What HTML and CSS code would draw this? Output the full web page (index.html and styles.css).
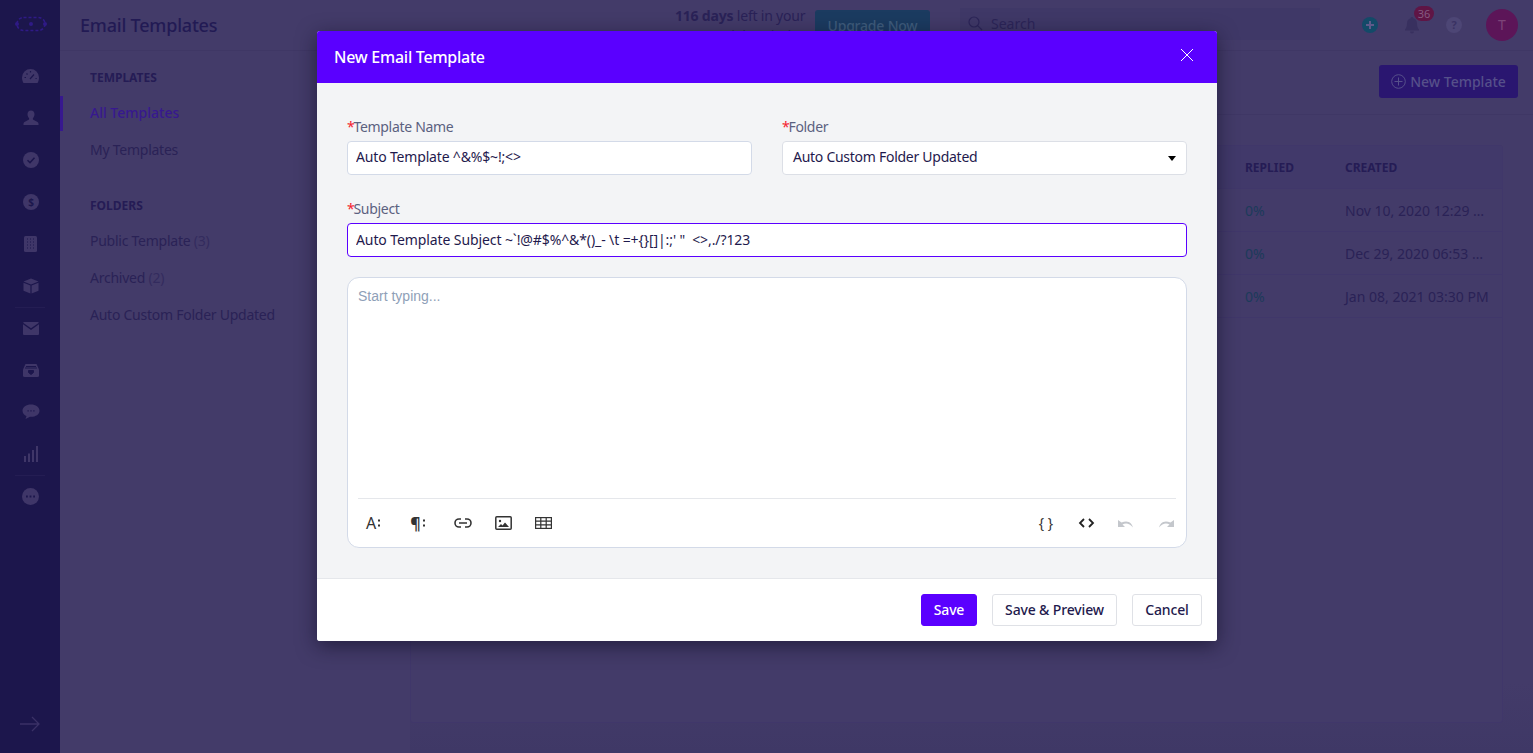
FILE: index.html
```html
<!DOCTYPE html>
<html>
<head>
    <title>Email Templates</title>
    <link rel="stylesheet" href="styles.css">
</head>
<body>
    <div class="app">
        <aside class="sidebar">
            <div class="logo">
                <svg width="34" height="16" viewBox="0 0 34 16"><rect x="3" y="1.500" width="28" height="13" rx="6.500" fill="none" stroke="#2f1a86" stroke-width="1.600" stroke-dasharray="3 2"/><circle cx="3" cy="8" r="2" fill="#2f1a86"/><circle cx="17" cy="8" r="2" fill="#2f1a86"/><circle cx="31" cy="8" r="2" fill="#2f1a86"/></svg>
            </div>
            <nav class="side-nav">
                <a class="side-item"><svg width="17" height="14" viewBox="0 0 17 14"><path d="M8.500 0a8.500 8.500 0 0 0-8.500 8.500c0 2 .5 3.800 1.500 5.500h14c1-1.700 1.500-3.500 1.500-5.500A8.500 8.500 0 0 0 8.500 0z"/><path d="M8 10l4-4.500M2.500 8.500h1.500M13.500 9.500h1.200M4.500 4.500l1 1M8.500 2v1.500" stroke="#1c164c" stroke-width="1.200"/></svg></a>
                <a class="side-item"><svg width="16" height="16" viewBox="0 0 16 16"><path d="M8 0.500c-2.200 0-3.500 1.700-3.500 3.800 0 1.700.8 3 1.600 3.900v1.400L1.500 12c-.7.400-1 1-1 1.700V15h15v-1.300c0-.7-.3-1.300-1-1.700l-4.600-2.400V8.200c.8-.9 1.600-2.200 1.600-3.900 0-2.100-1.300-3.800-3.500-3.800z"/></svg></a>
                <a class="side-item"><svg width="16" height="16" viewBox="0 0 16 16"><circle cx="8" cy="8" r="8"/><path d="M4.500 8.200l2.500 2.400 4.500-4.800" fill="none" stroke="#1c164c" stroke-width="1.500"/></svg></a>
                <a class="side-item"><svg width="16" height="16" viewBox="0 0 16 16"><circle cx="8" cy="8" r="8"/><text x="8" y="11.500" class="dollar">$</text></svg></a>
                <a class="side-item"><svg width="13" height="16" viewBox="0 0 13 16"><rect width="13" height="16" rx="1.500"/><path d="M3 3h1M6 3h1M9 3h1M3 6h1M6 6h1M9 6h1M3 9h1M6 9h1M9 9h1M3 12h1M6 12h1M9 12h1" stroke="#1c164c" stroke-width="1.200"/></svg></a>
                <a class="side-item"><svg width="16" height="16" viewBox="0 0 16 16"><path d="M8 0.500L15.500 3.500 8 6.500 0.500 3.500zM0.500 4.800L7.400 7.600V15.500L0.500 12.700zM15.500 4.800L8.600 7.600V15.500L15.500 12.700z"/></svg></a>
                <div class="side-sep"></div>
                <a class="side-item"><svg width="16" height="13" viewBox="0 0 16 13"><path d="M1.200 0h13.600c.5 0 .9.300 1.100.7L8 6.300.1.700C.3.300.7 0 1.200 0zM0 2.300V12a1 1 0 0 0 1 1h14a1 1 0 0 0 1-1V2.300L8 8z"/></svg></a>
                <a class="side-item"><svg width="16" height="13" viewBox="0 0 16 13"><path d="M2.500 0h11l2.500 5.500V11.500A1.500 1.500 0 0 1 14.500 13h-13A1.500 1.500 0 0 1 0 11.500V5.500z"/><path d="M2 4h12M3 2.500h10M5.500 6.500h5v2L8 10.500l-2.500-2z" stroke="#1c164c" stroke-width="1" fill="#1c164c"/></svg></a>
                <a class="side-item"><svg width="18" height="16" viewBox="0 0 18 16"><path d="M9 0.500c-4.800 0-8.500 2.600-8.500 6.200 0 2.400 1.700 4.300 4 5.300L3.500 15l4.500-2.200h1c4.800 0 8.500-2.500 8.500-6.100S13.800.5 9 .5z"/><path d="M5.500 6.800h1.200M8.400 6.800h1.200M11.300 6.800h1.200" stroke="#1c164c" stroke-width="1.300"/></svg></a>
                <a class="side-item"><svg width="14" height="16" viewBox="0 0 14 16"><rect x="0" y="10" width="2" height="6"/><rect x="4" y="7.500" width="2" height="8.500"/><rect x="8" y="4" width="2" height="12"/><rect x="12" y="0" width="2" height="16"/></svg></a>
                <div class="side-sep"></div>
                <a class="side-item"><svg width="17" height="17" viewBox="0 0 17 17"><circle cx="8.500" cy="8.500" r="8.500"/><path d="M4 8.500h1.800M7.600 8.500h1.800M11.200 8.500H13" stroke="#1c164c" stroke-width="1.800"/></svg></a>
            </nav>
            <div class="collapse">
                <svg width="22" height="16" viewBox="0 0 22 16" fill="none" stroke="#3a3166" stroke-width="1.300"><path d="M1 8h19M13 1l7 7-7 7"/></svg>
            </div>
        </aside>

        <div class="page">
            <header class="topbar">
                <h1 class="page-title">Email Templates</h1>
                <div class="trial"><b>116 days</b> left in your<br>CRM Trial period!</div>
                <button class="upgrade">Upgrade Now</button>
                <div class="search">
                    <svg width="15" height="15" viewBox="0 0 15 15" fill="none" stroke="#2c2558" stroke-width="1.200"><circle cx="6" cy="6" r="5"/><path d="M9.700 9.700L14 14"/></svg>
                    <span>Search</span>
                </div>
                <div class="top-icons">
                    <svg width="18" height="18" viewBox="0 0 18 18"><circle cx="9" cy="9" r="8" fill="#134a68"/><path d="M9 5v8M5 9h8" stroke="#5f5a8a" stroke-width="2"/></svg>
                    <div class="bell">
                        <svg width="20" height="20" viewBox="0 0 20 20"><path d="M10 2a1.300 1.300 0 0 0-1.300 1.300C6 4 5 6.200 5 8.500c0 3-.8 4.600-2 6v1h14v-1c-1.200-1.400-2-3-2-6 0-2.300-1-4.500-3.700-5.200A1.300 1.300 0 0 0 10 2zM8 16.500a2 2 0 0 0 4 0z" fill="#38305f"/></svg>
                        <span class="badge">36</span>
                    </div>
                    <svg width="18" height="18" viewBox="0 0 18 18"><circle cx="9" cy="9" r="8" fill="#4d4675"/><text x="9" y="13" class="help-mark">?</text></svg>
                    <div class="avatar">T</div>
                </div>
            </header>

            <div class="content">
                <div class="subnav">
                    <h3 class="subnav-head">TEMPLATES</h3>
                    <a class="subnav-item active">All Templates</a>
                    <a class="subnav-item">My Templates</a>
                    <h3 class="subnav-head second">FOLDERS</h3>
                    <a class="subnav-item">Public Template <span class="count">(3)</span></a>
                    <a class="subnav-item">Archived <span class="count">(2)</span></a>
                    <a class="subnav-item">Auto Custom Folder Updated</a>
                </div>
                <main class="main">
                    <div class="main-head">
                        <button class="new-btn">
                            <svg width="15" height="15" viewBox="0 0 15 15" fill="none" stroke="#56508a" stroke-width="1"><circle cx="7.500" cy="7.500" r="6.800"/><path d="M7.500 3.500v8M3.500 7.500h8"/></svg>
                            New Template
                        </button>
                    </div>
                    <div class="card">
                        <div class="row row-head"><span>REPLIED</span><span>CREATED</span></div>
                        <div class="row"><span class="pct">0%</span><span>Nov 10, 2020 12:29 …</span></div>
                        <div class="row"><span class="pct">0%</span><span>Dec 29, 2020 06:53 …</span></div>
                        <div class="row"><span class="pct">0%</span><span>Jan 08, 2021 03:30 PM</span></div>
                    </div>
                </main>
            </div>
        </div>
    </div>

    <div class="modal">
        <div class="modal-head">
            <span>New Email Template</span>
            <svg width="14" height="14" viewBox="0 0 14 14" stroke="#fff" stroke-width="1"><path d="M1 1l12 12M13 1L1 13"/></svg>
        </div>
        <div class="modal-body">
            <div class="form-row">
                <div class="field">
                    <label class="label"><i>*</i>Template Name</label>
                    <input class="input name-input" type="text" value="Auto Template ^&amp;%$~!;&lt;&gt;">
                </div>
                <div class="field">
                    <label class="label"><i>*</i>Folder</label>
                    <div class="select">
                        <span>Auto Custom Folder Updated</span>
                        <span class="caret"></span>
                    </div>
                </div>
            </div>
            <div class="field subject">
                <label class="label"><i>*</i>Subject</label>
                <input class="input focused" type="text" value="Auto Template Subject ~`!@#$%^&amp;*()_- \t =+{}[]|:;' &quot;  &lt;&gt;,./?123">
            </div>
            <div class="editor">
                <div class="editor-area">Start typing...</div>
                <div class="toolbar">
                    <div class="tools">
                        <span class="tool w-a">A<svg class="dots" width="3" height="10" viewBox="0 0 3 10"><rect y="1.500" width="2" height="2"/><rect y="6.500" width="2" height="2"/></svg></span>
                        <span class="tool w-p">¶<svg class="dots" width="3" height="10" viewBox="0 0 3 10"><rect y="1.500" width="2" height="2"/><rect y="6.500" width="2" height="2"/></svg></span>
                        <span class="tool w-l"><svg width="18" height="10" viewBox="0 0 18 10" fill="none" stroke="#333" stroke-width="1.600"><path d="M7 1H5a4 4 0 0 0 0 8h2M11 1h2a4 4 0 0 1 0 8h-2M5 5h8"/></svg></span>
                        <span class="tool w-i"><svg width="17" height="14" viewBox="0 0 17 14"><rect x="0.800" y="0.800" width="15.400" height="12.400" rx="1" fill="none" stroke="#333" stroke-width="1.500"/><circle cx="5" cy="5" r="1.200" fill="#333"/><path d="M3 11l3-3 1.500 1.500L10 6.500 14 11z" fill="#333"/></svg></span>
                        <span class="tool w-t"><svg width="17" height="12" viewBox="0 0 17 12" fill="none" stroke="#333" stroke-width="1.200"><rect x="0.600" y="0.600" width="15.800" height="10.800"/><path d="M0.600 4.200h15.800M0.600 7.800h15.800M5.800 0.600v10.800M11.200 0.600v10.800"/></svg></span>
                    </div>
                    <div class="tools right">
                        <span class="tool w-b">{ }</span>
                        <span class="tool w-r"><svg width="17" height="10" viewBox="0 0 17 10" fill="none" stroke="#222" stroke-width="1.800"><path d="M6 1L2 5l4 4M11 1l4 4-4 4"/></svg></span>
                        <span class="tool w-r"><svg width="16" height="9" viewBox="0 0 16 9" fill="#c4c7cc"><path d="M0 1v7h7L4.500 5.500C7.500 3.500 11.500 4 15 8.500 14 4 10 0.500 3.500 3.500z"/></svg></span>
                        <span class="tool w-r"><svg width="16" height="9" viewBox="0 0 16 9" fill="#c4c7cc"><path d="M16 1v7H9l2.500-2.500C8.500 3.500 4.500 4 1 8.500 2 4 6 0.500 12.500 3.500z"/></svg></span>
                    </div>
                </div>
            </div>
        </div>
        <div class="modal-foot">
            <button class="btn primary save-btn">Save</button>
            <button class="btn preview-btn">Save &amp; Preview</button>
            <button class="btn cancel-btn">Cancel</button>
        </div>
    </div>
</body>
</html>
```
FILE: styles.css
```css
* {
    box-sizing: border-box;
}
body, html {
    margin: 0;
    padding: 0;
    height: 100%;
    overflow: hidden;
    font-family: "Noto Sans", "DejaVu Sans", sans-serif;
    font-size: 14px;
    background-color: #433b69;
    color: #2e2659;
}
.app {
    display: flex;
    height: 100vh;
}

/* left rail */
.sidebar {
    width: 60px;
    flex: none;
    background-color: #1c164c;
    display: flex;
    flex-direction: column;
}
.logo {
    height: 48px;
    padding-top: 16px;
    padding-left: 14px;
}
.side-nav {
    margin-top: 7px;
}
.side-item {
    display: flex;
    height: 42px;
    align-items: center;
    justify-content: center;
    padding-left: 1px;
}
.side-item svg {
    fill: #3f3668;
}
.side-sep {
    height: 1px;
    margin: 0 15px -1px;
    background-color: #241d53;
}
.dollar {
    font-size: 10px;
    font-weight: 700;
    text-anchor: middle;
    fill: #1c164c;
}
.collapse {
    margin-top: auto;
    padding: 0 0 21px 19px;
    line-height: 0;
}

/* top bar */
.page {
    flex: 1;
    display: flex;
    flex-direction: column;
    min-width: 0;
}
.topbar {
    height: 51px;
    flex: none;
    display: flex;
    align-items: center;
    padding: 0 15px 0 20px;
    border-bottom: 1px solid #3f3765;
}
.page-title {
    flex: 1;
    margin: 0;
    font-size: 18px;
    font-weight: 500;
    letter-spacing: -0.2px;
    color: #221a54;
}
.trial {
    width: 130px;
    height: 40px;
    margin-top: 2px;
    line-height: 20px;
    letter-spacing: -0.2px;
    text-align: center;
    white-space: nowrap;
    color: #2a2257;
}
.upgrade {
    width: 115px;
    height: 31px;
    margin: 0 30px 0 10px;
    border: 0;
    border-radius: 3px;
    background-color: #1b3b60;
    color: #3f5d7c;
    letter-spacing: -0.2px;
    font: 500 14px "Noto Sans", sans-serif;
}
.search {
    width: 360px;
    height: 32px;
    margin-top: -2px;
    display: flex;
    align-items: center;
    gap: 8px;
    padding: 0 0 2px 8px;
    background-color: #3f3867;
    color: #2c2558;
}
.top-icons {
    display: flex;
    align-items: center;
    gap: 23px;
    margin-left: 41px;
}
.top-icons svg {
    display: block;
}
.bell {
    position: relative;
}
.badge {
    position: absolute;
    top: -9px;
    left: 12px;
    width: 20px;
    height: 15px;
    border-radius: 8px;
    background-color: #5f1545;
    color: #855a80;
    font-size: 11px;
    line-height: 15px;
    text-align: center;
}
.help-mark {
    font-size: 11px;
    font-weight: 700;
    text-anchor: middle;
    fill: #3a3263;
}
.avatar {
    width: 32px;
    height: 32px;
    border-radius: 50%;
    background-color: #5c1558;
    color: #7d4478;
    line-height: 32px;
    text-align: center;
}

/* page below the bar */
.content {
    flex: 1;
    display: flex;
    min-height: 0;
}
.subnav {
    width: 350px;
    flex: none;
    padding-top: 18px;
}
.subnav-head {
    margin: 0 0 10px;
    padding-left: 30px;
    font-size: 12px;
    line-height: 17px;
    font-weight: 700;
    color: #251c55;
}
.subnav-head.second {
    margin-top: 27px;
}
.subnav-item {
    display: block;
    height: 37px;
    padding-left: 30px;
    line-height: 33px;
    letter-spacing: -0.25px;
    color: #2a2256;
}
.subnav-item.active {
    color: #37188f;
    font-weight: 500;
    letter-spacing: 0;
    border-left: 3px solid #37188f;
    padding-left: 27px;
    height: 35px;
    margin-bottom: 2px;
}
.count {
    color: #332b5e;
}
.main {
    flex: 1;
    display: flex;
    flex-direction: column;
    background: linear-gradient(#433b69 90%, #3f3866);
}
.main-head {
    height: 64px;
    flex: none;
    display: flex;
    justify-content: flex-end;
    padding: 14px 15px 0 0;
    border-bottom: 1px solid #3f3765;
}
.new-btn {
    width: 139px;
    height: 33px;
    display: flex;
    align-items: center;
    justify-content: center;
    gap: 4px;
    border: 0;
    border-radius: 3px;
    background-color: #2a1670;
    color: #56508a;
    font: 500 14px "Noto Sans", sans-serif;
}
.card {
    flex: 1;
    margin: 30px 30px 30px 0;
    background-color: #433b69;
    border: 1px solid #40376a;
    border-radius: 3px;
}
.row {
    display: grid;
    grid-template-columns: 100px 157px;
    justify-content: end;
    height: 43px;
    align-items: center;
    border-bottom: 1px solid #40376a;
    color: #2a2256;
    white-space: nowrap;
}
.row-head {
    font-size: 12px;
    font-weight: 700;
    color: #251c55;
    background-color: #41396a;
}
.pct {
    color: #1c3a5a;
}

/* dialog */
.modal {
    position: absolute;
    top: 31px;
    left: 317px;
    width: 900px;
    height: 610px;
    display: flex;
    flex-direction: column;
    border-radius: 3px;
    overflow: hidden;
    background-color: #f3f4f6;
    box-shadow: 0 5px 20px rgba(15, 12, 35, 0.6);
}
.modal-head {
    height: 52px;
    flex: none;
    display: flex;
    align-items: center;
    justify-content: space-between;
    padding: 0 23px 0 17px;
    background-color: #5a00ff;
    color: #fff;
    font-size: 16px;
    font-weight: 500;
    letter-spacing: -0.25px;
}
.modal-head svg {
    margin-top: -4px;
}
.modal-body {
    flex: 1;
    padding: 35px 30px 30px;
}
.form-row {
    display: grid;
    grid-template-columns: 1fr 1fr;
    gap: 30px;
}
.field {
    margin-bottom: 25px;
}
.field.subject {
    margin-bottom: 20px;
}
.label {
    display: block;
    height: 18px;
    margin-bottom: 5px;
    line-height: 18px;
    letter-spacing: -0.3px;
    color: #5b6180;
}
.label i {
    margin-right: -1px;
    color: #f5222d;
    font-style: normal;
}
.input, .select {
    display: block;
    width: 100%;
    height: 34px;
    padding: 0 8px 2px;
    background-color: #fff;
    border: 1px solid #d3dae8;
    border-radius: 4px;
    color: #1f1a4d;
    font: 14px "Noto Sans", sans-serif;
    letter-spacing: -0.1px;
    outline: none;
}
.input.name-input {
    padding-bottom: 4px;
    letter-spacing: -0.17px;
}
.input.focused {
    border-color: #5a00ff;
}
.select {
    display: flex;
    align-items: center;
    justify-content: space-between;
    padding: 0 10px 4px 10px;
    border-color: #dcdfe6;
    letter-spacing: -0.27px;
}
.caret {
    margin-top: 5px;
    border: 4px solid transparent;
    border-top: 5px solid #000;
    border-bottom: 0;
}
.editor {
    height: 271px;
    display: flex;
    flex-direction: column;
    padding: 0 10px;
    background-color: #fff;
    border: 1px solid #d3dae8;
    border-radius: 12px;
}
.editor-area {
    flex: 1;
    padding-top: 10px;
    font-family: "Liberation Sans", Arial, sans-serif;
    color: #8f9fb8;
    line-height: 17px;
}
.toolbar {
    height: 49px;
    flex: none;
    display: flex;
    justify-content: space-between;
    border-top: 1px solid #e5e7eb;
}
.tools {
    display: flex;
    align-items: center;
}
.tool {
    display: flex;
    align-items: center;
    justify-content: center;
    gap: 2px;
    color: #333;
    font-size: 16px;
    line-height: 1;
}
.dots {
    fill: #333;
}
.tool.w-a { width: 31px; }
.tool.w-p { width: 58px; font-weight: 700; }
.tool.w-l { width: 31px; }
.tool.w-i { width: 50px; }
.tool.w-t { width: 30px; }
.tool.w-b { width: 40px; font-size: 14px; }
.tool.w-r { width: 40px; }
.tools.right {
    margin-right: -10px;
}
.modal-foot {
    height: 63px;
    flex: none;
    display: flex;
    align-items: center;
    justify-content: flex-end;
    gap: 15px;
    padding: 0 15px 1px 0;
    background-color: #fff;
    border-top: 1px solid #e5e7eb;
}
.btn {
    height: 32px;
    padding: 0;
    background-color: #fff;
    border: 1px solid #dfe1e6;
    border-radius: 3px;
    color: #1f1a4d;
    font: 500 14px "Noto Sans", sans-serif;
    letter-spacing: -0.15px;
}
.btn.primary {
    background-color: #5a00ff;
    border-color: #5a00ff;
    color: #fff;
}
.save-btn { width: 56px; }
.preview-btn { width: 125px; }
.cancel-btn { width: 70px; }
```
